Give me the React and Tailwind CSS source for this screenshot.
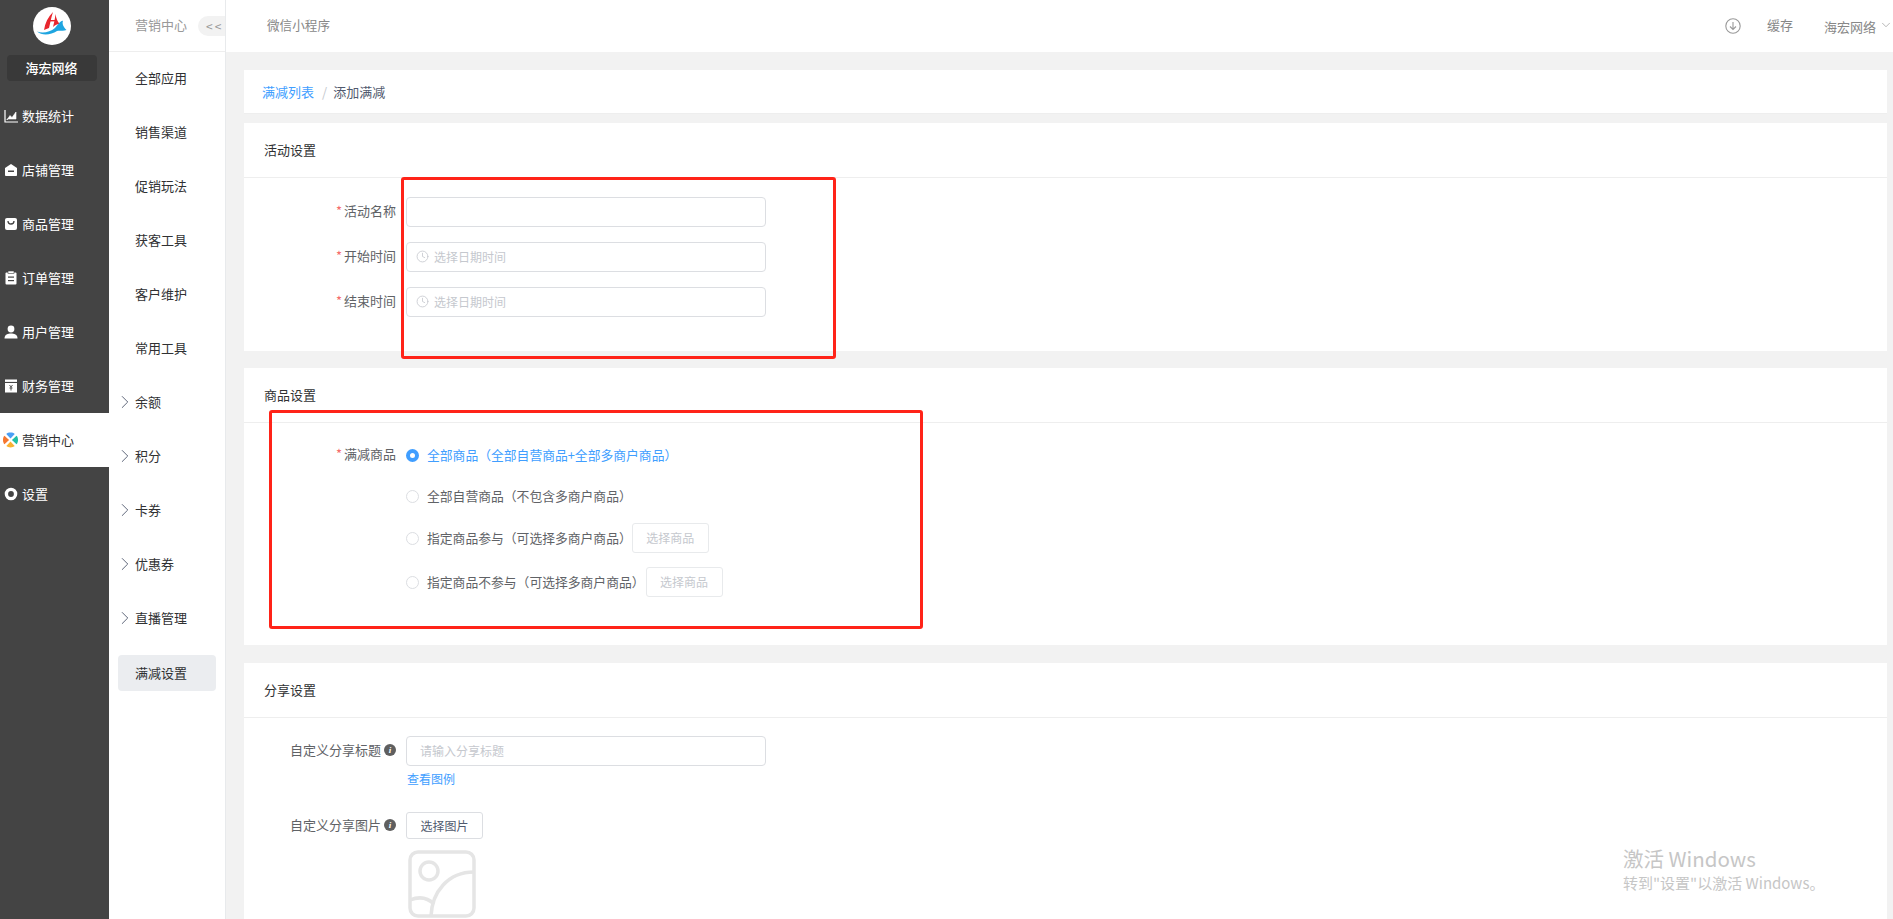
import React from 'react';
import { ChevronRight, ChevronDown, Clock } from 'lucide-react';

const fontStack = "font-['Noto_Sans_CJK_SC','Noto_Sans',sans-serif]";

const Logo = () => (
    <svg viewBox="0 0 38 38" className="w-[38px] h-[38px]">
        <circle cx="19" cy="19" r="19" fill="#fff" />
        <path d="M11 23C12 16 15 10 20 5C18 11 17 17 16 21Z" fill="#e8262d" />
        <path d="M20 20C21 16 22 12 22.5 7C23 11 24.5 15 27 17C24 17 22 18 20 20Z" fill="#e8262d" />
        <rect x="14" y="13" width="8" height="1.4" fill="#e8262d" />
        <path d="M4 24.5C10 27 17 25 22 21C25 18 28 13 30 14C29 16 30 20 33.5 23C30 24.5 27 23 24 24C18 28 9 29 4 24.5Z" fill="#1ea5e0" />
    </svg>
);

const ChartIcon = () => (
    <svg viewBox="0 0 14 14" className="w-[14px] h-[14px]" fill="none" stroke="#fff" strokeWidth="1.2">
        <path d="M1 1V13H14" />
        <path d="M3 11L6 6.5L8 8.5L12 3V10H3Z" fill="#fff" strokeWidth="0.6" />
    </svg>
);

const ShopIcon = () => (
    <svg viewBox="0 0 14 14" className="w-[14px] h-[14px]">
        <path d="M1 5L7 1L13 5V12C13 13 12 13 12 13H2C2 13 1 13 1 12Z" fill="#fff" />
        <rect x="4" y="7.5" width="6" height="1.5" fill="#444" />
    </svg>
);

const GoodsIcon = () => (
    <svg viewBox="0 0 14 14" className="w-[14px] h-[14px]">
        <rect x="1" y="1" width="12" height="12" rx="2" fill="#fff" />
        <path d="M4 4C4 8 10 8 10 4" fill="none" stroke="#444" strokeWidth="1.3" />
    </svg>
);

const OrderIcon = () => (
    <svg viewBox="0 0 14 14" className="w-[14px] h-[14px]">
        <rect x="1.5" y="1.5" width="11" height="12" rx="1" fill="#fff" />
        <rect x="4" y="0" width="6" height="2.5" fill="#fff" stroke="#444" strokeWidth="0.6" />
        <rect x="4" y="5.5" width="6" height="1.2" fill="#444" />
        <rect x="4" y="9" width="6" height="1.2" fill="#444" />
    </svg>
);

const UserIcon = () => (
    <svg viewBox="0 0 14 14" className="w-[14px] h-[14px]" fill="#fff">
        <circle cx="7" cy="4" r="3.4" />
        <path d="M0.5 13.5C0.5 9.5 4 8.6 7 8.6C10 8.6 13.5 9.5 13.5 13.5Z" />
    </svg>
);

const FinanceIcon = () => (
    <svg viewBox="0 0 14 14" className="w-[14px] h-[14px]">
        <rect x="1" y="0.5" width="12" height="2.4" fill="#fff" />
        <rect x="1" y="4" width="12" height="9.5" fill="#fff" />
        <path d="M5.5 6L7 8L8.5 6M7 8V11.5M5.5 9H8.5" fill="none" stroke="#444" strokeWidth="0.9" />
    </svg>
);

const MarketingIcon = () => (
    <svg viewBox="0 0 16 16" className="w-[16px] h-[16px]">
        <path d="M3.5 1.5C5.5 -0.5 10.5 -0.5 12.5 1.5L8 6.5Z" fill="#4a9ff5" />
        <path d="M1.5 3.5C-0.5 5.5 -0.5 10.5 1.5 12.5L6.5 8Z" fill="#f5772f" />
        <path d="M14.5 3.5C16.5 5.5 16.5 10.5 14.5 12.5L9.5 8Z" fill="#1fbfa5" />
        <path d="M3.5 14.5C5.5 16.5 10.5 16.5 12.5 14.5L8 9.5Z" fill="#f9b233" />
    </svg>
);

const SettingIcon = () => (
    <svg viewBox="0 0 14 14" className="w-[14px] h-[14px]">
        <circle cx="7" cy="7" r="4.6" fill="none" stroke="#fff" strokeWidth="3.4" />
    </svg>
);

const menus = [
    { name: '数据统计', icon: <ChartIcon /> },
    { name: '店铺管理', icon: <ShopIcon /> },
    { name: '商品管理', icon: <GoodsIcon /> },
    { name: '订单管理', icon: <OrderIcon /> },
    { name: '用户管理', icon: <UserIcon /> },
    { name: '财务管理', icon: <FinanceIcon /> },
    { name: '营销中心', icon: <MarketingIcon />, active: true },
    { name: '设置', icon: <SettingIcon /> },
];

const subMenus = [
    { name: '全部应用' },
    { name: '销售渠道' },
    { name: '促销玩法' },
    { name: '获客工具' },
    { name: '客户维护' },
    { name: '常用工具' },
    { name: '余额', arrow: true },
    { name: '积分', arrow: true },
    { name: '卡券', arrow: true },
    { name: '优惠券', arrow: true },
    { name: '直播管理', arrow: true },
];

const Label = ({ children, required }) => (
    <div className="w-[152px] shrink-0 pb-[2px] flex items-center justify-end text-[13px] text-[#606266]">
        {required && <span className="mr-[2px] font-normal text-[#f56c6c]">*</span>}
        {children}
    </div>
);

const DateInput = () => (
    <div className="w-[360px] h-[30px] flex items-center gap-[5px] px-[9px] pb-[1px] bg-white border border-[#dcdee2] rounded text-[12px] text-[#c5c8ce]">
        <Clock size={13} strokeWidth={1.5} />
        <span>选择日期时间</span>
    </div>
);

const Radio = ({ checked }) => (
    <span className={`w-[13px] h-[13px] shrink-0 rounded-full bg-white ${checked ? 'border-[4px] border-[#409eff]' : 'border border-[#dcdee2]'}`}></span>
);

const CardTitle = ({ children }) => (
    <div className="h-[55px] flex items-center pl-5 text-[13px] text-[#303133] border-b border-[#eeeeee]">{children}</div>
);

const InfoDot = () => (
    <span className="ml-[3px] w-[12px] h-[12px] rounded-full bg-[#5f5f5f] text-white text-[9px] font-bold italic leading-[12px] text-center font-['Liberation_Serif',serif]">i</span>
);

const PickButton = ({ className }) => (
    <div className={`${className} w-[77px] h-[30px] flex items-center justify-center border border-[#e8eaec] rounded-[3px] text-[12px] text-[#c5c8ce]`}>选择商品</div>
);

const App = () => {
    return (
        <div className={`relative flex h-screen overflow-hidden bg-[#f2f2f2] ${fontStack}`}>
            {/* first level menu */}
            <aside className="w-[109px] shrink-0 bg-[#444444] text-white">
                <div className="h-[89px] pr-[6px] flex flex-col items-center pt-[7px]">
                    <Logo />
                    <div className="mt-[10px] w-[90px] h-[26px] flex items-center justify-center bg-[#393939] rounded text-[13px] font-medium">海宏网络</div>
                </div>
                {menus.map((item) => (
                    <div key={item.name} className={`h-[54px] flex items-center gap-[4px] pl-[3px] text-[13px] ${item.active ? 'bg-white text-[#303133]' : ''}`}>
                        <span className="w-[15px] flex justify-center">{item.icon}</span>
                        {item.name}
                    </div>
                ))}
            </aside>

            {/* second level menu */}
            <aside className="w-[117px] shrink-0 bg-white border-r border-[#e8eaec]">
                <div className="h-[52px] flex items-center pl-[26px] justify-between border-b border-[#eeeeee]">
                    <span className="text-[13px] pb-[2px] text-[#999999]">营销中心</span>
                    <span className="w-[27px] h-[20px] flex items-center justify-start pl-[8px] bg-[#f2f2f2] rounded-l-full text-[12px] tracking-[2px] text-[#999999] overflow-hidden">&lt;&lt;</span>
                </div>
                {subMenus.map((item) => (
                    <div key={item.name} className="relative h-[54px] flex items-center pb-[2px] pl-[26px] text-[13px] text-[#303133]">
                        {item.arrow && <ChevronRight size={22} strokeWidth={1} className="absolute left-[5px] text-[#515a6e]" />}
                        {item.name}
                    </div>
                ))}
                <div className="mx-[9px] mt-[9px] h-[36px] flex items-center pl-[17px] bg-[#ebedf0] rounded text-[13px] text-[#303133]">满减设置</div>
            </aside>

            <div className="flex-1 min-w-0 flex flex-col">
                <header className="h-[52px] shrink-0 flex items-center justify-between bg-white pl-[41px] text-[13px] text-[#888888]">
                    <span className="text-[12.6px] pb-[2px]">微信小程序</span>
                    <div className="flex items-center">
                        <svg viewBox="0 0 16 16" className="w-[16px] h-[16px]" fill="none" stroke="#999999" strokeWidth="1.1">
                            <circle cx="8" cy="8" r="7.2" />
                            <path d="M8 4V11M5 8.5L8 11.5L11 8.5" />
                        </svg>
                        <span className="ml-[26px] -mt-[2px]">缓存</span>
                        <span className="ml-[31px] mt-[2px]">海宏网络</span>
                        <ChevronDown size={14} strokeWidth={1.2} className="ml-[3px] -mt-[2px] text-[#999999]" />
                    </div>
                </header>

                <main className="flex-1 overflow-hidden pt-[18px] pl-[18px] pr-[6px]">
                    <div className="h-[44px] flex items-center pl-[18px] bg-white text-[13px] border-b border-[#eeeeee]">
                        <span className="text-[#409eff]">满减列表</span>
                        <span className="ml-[8px] mr-[6px] text-[#c5c8ce]">/</span>
                        <span className="text-[#515a6e]">添加满减</span>
                    </div>

                    {/* 活动设置 */}
                    <section className="mt-[9px] h-[228px] bg-white">
                        <CardTitle>活动设置</CardTitle>
                        <div className="pt-[19px] flex flex-col gap-[15px]">
                            <div className="flex items-center">
                                <Label required>活动名称</Label>
                                <div className="ml-[10px] w-[360px] h-[30px] bg-white border border-[#dcdee2] rounded"></div>
                            </div>
                            <div className="flex items-center">
                                <Label required>开始时间</Label>
                                <div className="ml-[10px]"><DateInput /></div>
                            </div>
                            <div className="flex items-center">
                                <Label required>结束时间</Label>
                                <div className="ml-[10px]"><DateInput /></div>
                            </div>
                        </div>
                    </section>

                    {/* 商品设置 */}
                    <section className="mt-[17px] h-[277px] bg-white">
                        <CardTitle>商品设置</CardTitle>
                        <div className="pt-[17px] text-[12.8px] text-[#606266]">
                            <div className="h-[30px] flex items-center">
                                <Label required>满减商品</Label>
                                <div className="ml-[10px] flex items-center gap-[8px] text-[#409eff]">
                                    <Radio checked />
                                    全部商品（全部自营商品+全部多商户商品）
                                </div>
                            </div>
                            <div className="mt-[11px] h-[30px] flex items-center pl-[162px] gap-[8px]">
                                <Radio />
                                全部自营商品（不包含多商户商品）
                            </div>
                            <div className="mt-[12px] h-[30px] flex items-center pl-[162px] gap-[8px]">
                                <Radio />
                                指定商品参与（可选择多商户商品）
                                <PickButton className="ml-[-8px]" />
                            </div>
                            <div className="mt-[14px] h-[30px] flex items-center pl-[162px] gap-[8px]">
                                <Radio />
                                指定商品不参与（可选择多商户商品）
                                <PickButton className="ml-[-7px]" />
                            </div>
                        </div>
                    </section>

                    {/* 分享设置 */}
                    <section className="mt-[18px] bg-white pb-[20px]">
                        <CardTitle>分享设置</CardTitle>
                        <div className="pt-[18px] text-[12px] text-[#606266]">
                            <div className="flex items-center">
                                <div className="w-[152px] shrink-0 pb-[2px] flex items-center justify-end text-[13px]">自定义分享标题<InfoDot /></div>
                                <div className="ml-[10px] w-[360px] h-[30px] flex items-center pl-[13px] pb-[1px] border border-[#dcdee2] rounded text-[#c5c8ce]">请输入分享标题</div>
                            </div>
                            <div className="ml-[163px] mt-[5px] h-[16px] leading-[16px] text-[#409eff]">查看图例</div>
                            <div className="mt-[25px] flex items-center">
                                <div className="w-[152px] shrink-0 pb-[2px] flex items-center justify-end text-[13px]">自定义分享图片<InfoDot /></div>
                                <div className="ml-[10px] w-[77px] h-[27px] flex items-center justify-center border border-[#dcdee2] rounded-[3px] text-[#515a6e]">选择图片</div>
                            </div>
                            <svg viewBox="0 0 68 68" className="ml-[164px] mt-[11px] w-[68px] h-[68px]" fill="none" stroke="#e5e5e5" strokeWidth="3.5">
                                <rect x="2" y="2" width="64" height="64" rx="8" />
                                <circle cx="21" cy="21" r="9" />
                                <path d="M66 22C40 22 24 42 23 66" />
                                <path d="M2 50C12 46 20 48 26 54" />
                            </svg>
                        </div>
                    </section>
                </main>
            </div>

            {/* annotation boxes on top of the screenshot */}
            <div className="absolute left-[401px] top-[177px] w-[435px] h-[182px] border-[3px] border-[#ff2318] rounded-[3px]"></div>
            <div className="absolute left-[269px] top-[410px] w-[654px] h-[219px] border-[3px] border-[#ff2318] rounded-[3px]"></div>

            {/* windows watermark */}
            <div className="absolute left-[1623px] top-[843px] text-[#c6c6c6] font-['Noto_Sans_CJK_SC','Open_Sans',sans-serif]">
                <div className="text-[20.5px] leading-[30px]">激活 Windows</div>
                <div className="text-[15px] leading-[20px]">转到"设置"以激活 Windows。</div>
            </div>
        </div>
    );
};

export default App;
